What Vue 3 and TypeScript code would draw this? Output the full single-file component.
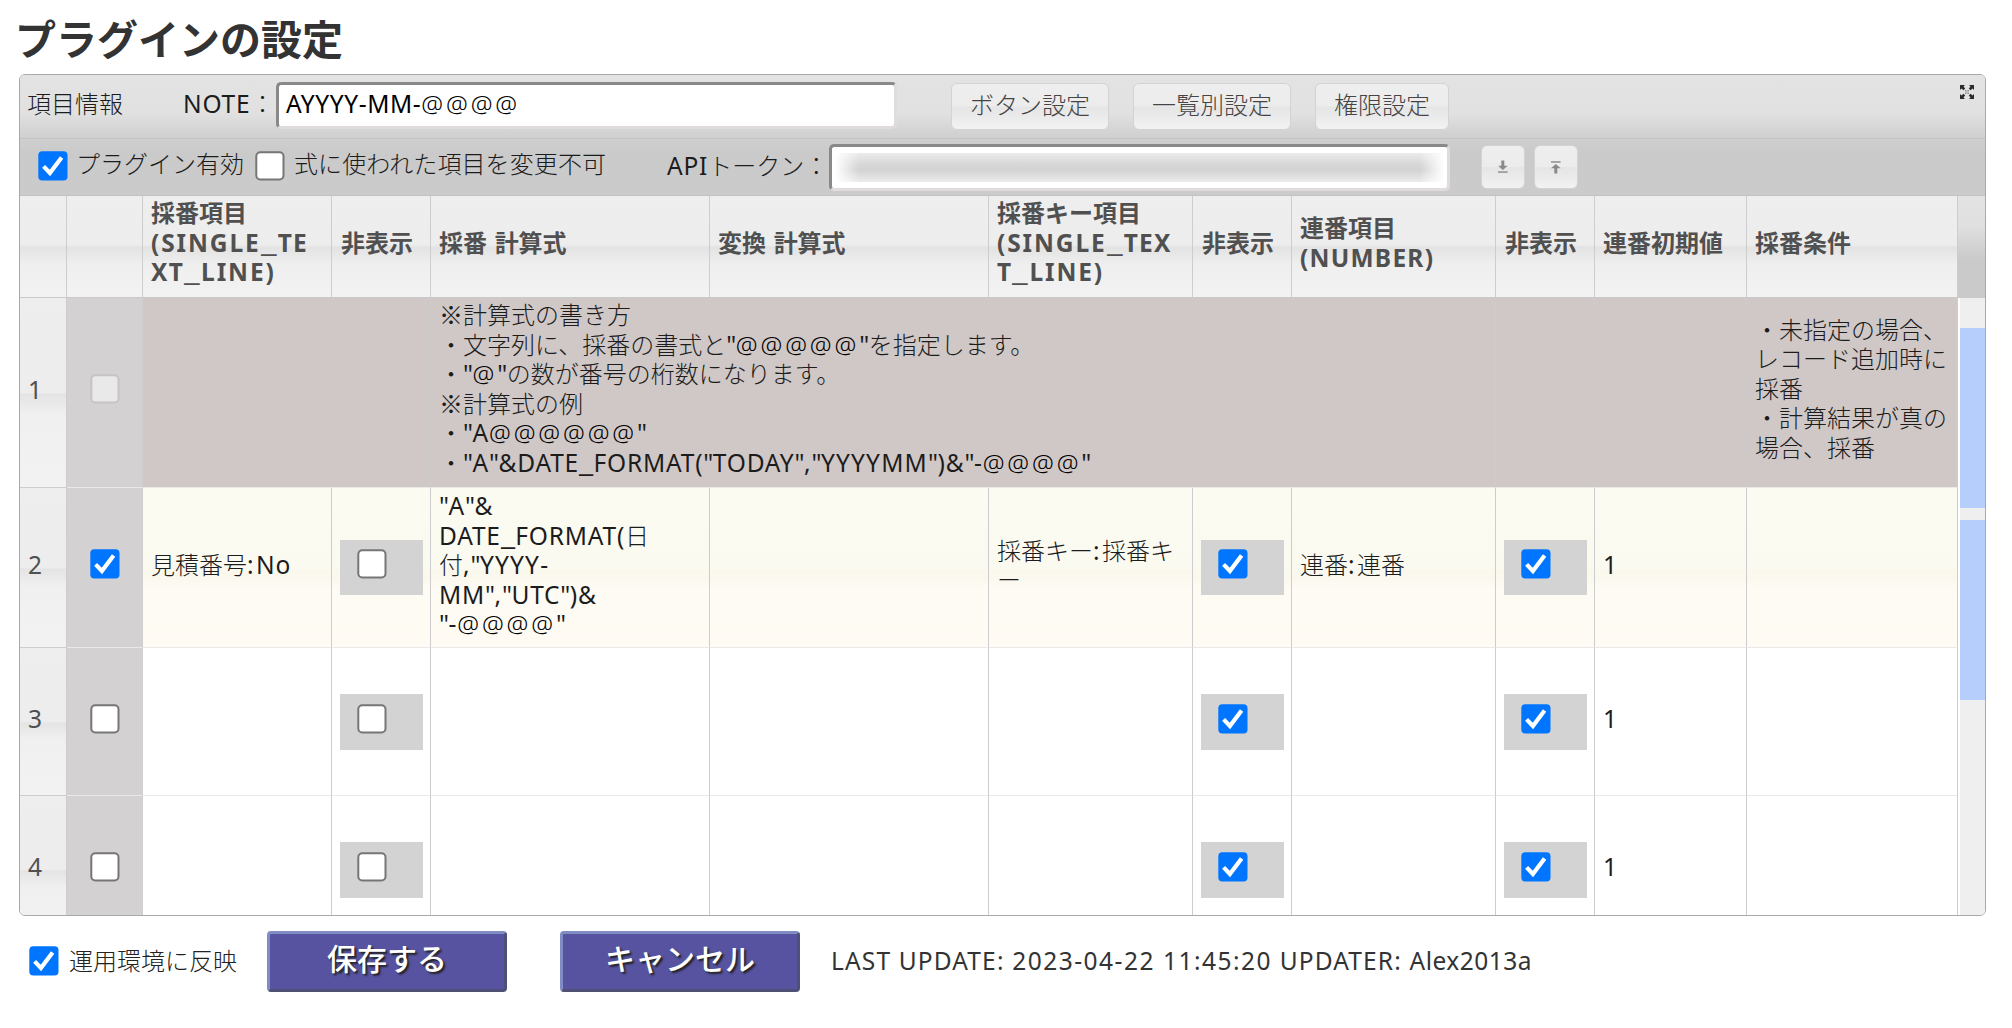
<script setup lang="ts">
import { h, type FunctionalComponent } from 'vue'

interface Row {
  no: number
  on: boolean
  item: string
  hide1: boolean
  formula: string[]
  key: string[]
  serial: string
}

const headers: string[][] = [
  [],
  [],
  ['採番項目', '(SINGLE_TE', 'XT_LINE)'],
  ['非表示'],
  ['採番 計算式'],
  ['変換 計算式'],
  ['採番キー項目', '(SINGLE_TEX', 'T_LINE)'],
  ['非表示'],
  ['連番項目', '(NUMBER)'],
  ['非表示'],
  ['連番初期値'],
  ['採番条件'],
]

const guide: string[] = [
  '※計算式の書き方',
  '・文字列に、採番の書式と"@@@@@"を指定します。',
  '・"@"の数が番号の桁数になります。',
  '※計算式の例',
  '・"A@@@@@@"',
  '・"A"&DATE_FORMAT("TODAY","YYYYMM")&"-@@@@"',
]
const condition: string[] = ['・未指定の場合、', 'レコード追加時に', '採番', '・計算結果が真の', '場合、採番']

const rows: Row[] = [
  {
    no: 2,
    on: true,
    item: '見積番号:No',
    hide1: false,
    formula: ['"A"&', 'DATE_FORMAT(日', '付,"YYYY-', 'MM","UTC")&', '"-@@@@"'],
    key: ['採番キー:採番キ', 'ー'],
    serial: '連番:連番',
  },
  { no: 3, on: false, item: '', hide1: false, formula: [], key: [], serial: '' },
  { no: 4, on: false, item: '', hide1: false, formula: [], key: [], serial: '' },
]

const runClass = (s: string): string => {
  const c = s[0]
  if (c === '@') return 'at'
  if (c === '_') return 'lat us'
  if (c === '"') return 'lat qt'
  if (c === ':') return 'lat co'
  if (s.charCodeAt(0) > 126) return 'jp'
  if (s.includes('IN')) return 'lat wide'
  return /Y{4}/.test(s) ? 'lat ys' : 'lat'
}

// Splits a line into Japanese, Latin and punctuation runs so each gets its own tracking
const Txt: FunctionalComponent<{ t: string }> = (p) =>
  h(
    'span',
    { class: 'txt' },
    (p.t.match(/@+|_+|"+|:+|[^\x00-\x1f"@_:\x7f-\uffff]+|[^\x20-\x7e]+/g) ?? []).map((s) =>
      h('span', { class: runClass(s) }, s),
    ),
  )
Txt.props = ['t']

const Check: FunctionalComponent<{ on?: boolean; off?: boolean }> = (p) =>
  h('svg', { class: 'check', width: 30, height: 30, viewBox: '0 0 30 30' }, [
    h('rect', {
      x: p.on ? 0.3 : 1.3,
      y: p.on ? 0.3 : 1.3,
      width: p.on ? 29.2 : 27.2,
      height: p.on ? 29.2 : 27.2,
      rx: 4,
      fill: p.on ? '#0075ff' : p.off ? '#e9e9e9' : '#fff',
      stroke: p.on ? 'none' : p.off ? '#c6c4c5' : '#767676',
      'stroke-width': 2,
    }),
    p.on ? h('path', { d: 'M5.6 15.4 L11.9 22 L23.6 6.4', fill: 'none', stroke: '#fff', 'stroke-width': 4.2 }) : null,
  ])
Check.props = { on: Boolean, off: Boolean }
</script>

<template>
  <main class="page">
    <h1>プラグインの設定</h1>
    <section class="panel">
      <div class="bar bar1">
        <span class="info">項目情報</span>
        <span class="note"><Txt t="NOTE：" /></span>
        <div class="input i1"><Txt t="AYYYY-MM-@@@@" /></div>
        <button class="btn b1">ボタン設定</button>
        <button class="btn b2">一覧別設定</button>
        <button class="btn b3">権限設定</button>
        <svg class="full" width="14" height="14" viewBox="0 0 14 14">
          <path d="M0 0h5L3.5 1.5 5.2 3.4 3.4 5.2 1.5 3.5 0 5zM14 0v5l-1.5-1.5-1.9 1.7-1.8-1.8 1.7-1.9L9 0zM0 14V9l1.5 1.5 1.9-1.7 1.8 1.8-1.7 1.9L5 14zM14 14H9l1.5-1.5-1.7-1.9 1.8-1.8 1.9 1.7L14 9z" fill="#2a2a2a" />
          <path d="M5.4 5.4l1 1M8.6 5.4l-1 1M5.4 8.6l1-1M8.6 8.6l-1-1" stroke="#666" stroke-width="1.2" />
        </svg>
      </div>
      <div class="bar bar2">
        <Check on />
        <span class="t1">プラグイン有効</span>
        <Check />
        <span class="t2">式に使われた項目を変更不可</span>
        <span class="t3"><Txt t="APIトークン：" /></span>
        <div class="input i2"><div class="mask"></div></div>
        <button class="btn ico k1">
          <svg width="12" height="14" viewBox="0 0 12 14"><path d="M4.3 0.5h3v5.2h3.4L5.8 10 1 5.7h3.3z" fill="#8a8a8a" /><rect x="1" y="11.2" width="9.6" height="1.7" fill="#9a9a9a" /></svg>
        </button>
        <button class="btn ico k2">
          <svg width="12" height="14" viewBox="0 0 12 14"><path d="M4.3 13.5h3V8.3h3.4L5.8 4 1 8.3h3.3z" fill="#8a8a8a" /><rect x="1" y="1.1" width="9.6" height="1.7" fill="#9a9a9a" /></svg>
        </button>
      </div>
      <div class="body">
        <div class="grid">
          <div v-for="(lines, i) in headers" :key="'h' + i" class="cell head">
            <Txt v-for="l in lines" :key="l" :t="l" />
          </div>

          <div class="cell num"><Txt t="1" /></div>
          <div class="cell sel first"><Check off /></div>
          <div class="cell tip span2"></div>
          <div class="cell tip span5"><Txt v-for="l in guide" :key="l" :t="l" /></div>
          <div class="cell tip"></div>
          <div class="cell tip"></div>
          <div class="cell tip"><Txt v-for="l in condition" :key="l" :t="l" /></div>

          <template v-for="r in rows" :key="r.no">
            <div class="cell num"><Txt :t="String(r.no)" /></div>
            <div class="cell sel" :class="{ first: r.on }"><Check :on="r.on" /></div>
            <div class="cell" :class="{ hot: r.on }"><Txt v-if="r.item" :t="r.item" /></div>
            <div class="cell" :class="{ hot: r.on }"><div class="box"><Check :on="r.hide1" /></div></div>
            <div class="cell" :class="{ hot: r.on }"><Txt v-for="l in r.formula" :key="l" :t="l" /></div>
            <div class="cell" :class="{ hot: r.on }"></div>
            <div class="cell" :class="{ hot: r.on }"><Txt v-for="l in r.key" :key="l" :t="l" /></div>
            <div class="cell" :class="{ hot: r.on }"><div class="box"><Check on /></div></div>
            <div class="cell" :class="{ hot: r.on }"><Txt v-if="r.serial" :t="r.serial" /></div>
            <div class="cell" :class="{ hot: r.on }"><div class="box"><Check on /></div></div>
            <div class="cell one" :class="{ hot: r.on }"><Txt t="1" /></div>
            <div class="cell" :class="{ hot: r.on }"></div>
          </template>
        </div>
        <div class="side">
          <div class="corner"></div>
          <div class="track"><div class="thumb"></div><div class="thumb"></div></div>
        </div>
      </div>
    </section>
    <footer class="foot">
      <Check on />
      <span class="reflect">運用環境に反映</span>
      <button class="main">保存する</button>
      <button class="main cancel">キャンセル</button>
      <span class="upd">LAST UPDATE: <span class="date">2023-04-22 11:45:20</span> UPDATER: <span class="who">Alex2013a</span></span>
    </footer>
  </main>
</template>

<style>
body { background: #fff; }
</style>

<style scoped>
* { box-sizing: border-box; }
.page {
  width: 2012px;
  height: 1028px;
  overflow: hidden;
  padding: 0 26px 0 19px;
  font: 300 24px/29.5px "Noto Sans CJK JP", sans-serif;
  color: #1c1c1c;
}
h1 {
  margin: 0 0 0 -4px;
  height: 74px;
  font-size: 41px;
  line-height: 75px;
  font-weight: 700;
  color: #333;
  white-space: nowrap;
}
button { font: inherit; padding: 0; margin: 0; }
.page :deep(.txt) { display: block; flex: none; white-space: pre; line-height: 29.5px; height: 29.5px; }
.page :deep(.lat), .page :deep(.at) { font-family: "Noto Sans", sans-serif; font-weight: 400; font-size: 24.5px; letter-spacing: 0.8px; line-height: 20px; }
.page :deep(.at) { font-weight: 300; letter-spacing: 2.9px; color: #000; }
.page :deep(.qt) { letter-spacing: -0.5px; }
.page :deep(.co) { letter-spacing: 2.4px; }
.page :deep(.ys) { letter-spacing: 1.2px; }
.input :deep(.ys) { letter-spacing: 0.6px; }
.page :deep(.us) { display: inline-block; width: 14.5px; letter-spacing: 0; transform: scaleX(1.3); transform-origin: left; }
.page :deep(.check) { display: block; flex: none; }

.panel {
  width: 1967px;
  height: 842px;
  border: 1px solid #a9a9a9;
  border-radius: 6px;
  overflow: hidden;
  display: flex;
  flex-direction: column;
}
.bar { display: flex; flex: none; white-space: nowrap; }
.bar1 {
  height: 64px;
  padding: 7px 11px 0 7px;
  border-bottom: 1px solid #c3c3c3;
  background: linear-gradient(#e3e3e3, #e1e1e1 60%, #cfcfcf);
}
.bar2 {
  height: 57px;
  padding: 5px 0 0 18px;
  border-bottom: 1px solid #c3c3c3;
  background: linear-gradient(#cfcfcf, #cacaca 25%, #cbcbcb);
}
.info { width: 156px; padding-top: 6px; }
.note { width: 93px; padding-top: 6px; }
.input {
  flex: none;
  width: 621px;
  height: 47px;
  border: 3px solid;
  border-color: #8a8888 #e0dcdc #e0dcdc #8a8888;
  border-radius: 5px;
  background: #fff;
  color: #000;
  padding: 3px 7px;
}
.btn {
  flex: none;
  height: 47px;
  border: 1px solid #d3d3d3;
  border-radius: 6px;
  background: linear-gradient(#eee, #ececec 49%, #e5e5e5 51%, #f2f2f2);
  color: #444;
  line-height: 39px;
  padding-bottom: 6px;
}
.b1 { width: 158px; margin: 1px 24px 0 54px; }
.b2 { width: 158px; margin: 1px 24px 0 0; }
.b3 { width: 134px; margin-top: 1px; }
.full { margin: 3px 0 0 auto; }
.bar2 :deep(.check) { margin-top: 7px; }
.t1 { flex: none; width: 187px; padding: 4px 0 0 8px; }
.t2 { flex: none; padding-top: 4px; margin-left: 9px; width: 373px; letter-spacing: 0.1px; }
.t3 { flex: none; padding-top: 5.5px; width: 162px; }
.i2 { padding: 6px 3px; }
.mask {
  height: 29px;
  background:
    linear-gradient(90deg, #fff 0, transparent 4%, transparent 96%, #fff),
    linear-gradient(#ebebeb, #d8d8d8 38%, #d2d2d2 58%, #ececec);
}
.ico { width: 44px; height: 44px; display: flex; align-items: center; justify-content: center; padding: 0; }
.k1 { margin: 1px 9px 0 31px; }
.k2 { margin-top: 1px; }

.body { display: flex; flex: 1; min-height: 0; overflow: hidden; }
.grid {
  display: grid;
  flex: none;
  width: 1938px;
  grid-template-columns: 47px 76px 189px 99px 279px 279px 204px 99px 204px 99px 152px 211px;
  grid-template-rows: 102px 190px 160px 148px 148px;
}
.cell {
  border-right: 1px solid #cdcdcd;
  border-bottom: 1px solid #e9e9e9;
  padding: 0 0 7px 8px;
  display: flex;
  flex-direction: column;
  justify-content: center;
  overflow: hidden;
  background: #fff;
}
.head {
  font-weight: 700;
  color: #505050;
  border-bottom-color: #c9c9c9;
  padding-bottom: 10px;
  background: linear-gradient(#eee, #ededed 48%, #e3e3e3 51%, #efefef 68%, #f2f2f2);
}
.head:nth-child(4), .head:nth-child(8), .head:nth-child(10) { padding-left: 9px; }
.head :deep(.lat) { font-weight: 700; letter-spacing: 1.25px; }
.head :deep(.wide) { letter-spacing: 1.9px; }
.head :deep(.us) { width: 17px; letter-spacing: 0; transform: scaleX(1.55); }
.num {
  color: #505050;
  border-bottom-color: #cdcdcd;
  background: linear-gradient(#eee, #ededed 50%, #e4e4e4 51%, #f0f0f0 62%, #f2f2f2);
}
.sel { background: #d3d1d2; border-right-color: #d0cecf; padding: 0 0 6px 23px; }
.first { padding-bottom: 8px; }
.tip { background: #d0c8c6; border-right-color: #cdcbcb; padding-bottom: 10px; }
.span2 { grid-column: span 2; }
.span5 { grid-column: span 5; }
.hot { background: linear-gradient(#fbfbf2, #fbfaf1 50%, #faf8ec 53%, #fdfbf3 64%, #fffbf4); }
.box { flex: none; width: 83px; height: 56px; background: #d3d3d3; padding: 10px 0 0 17px; margin-top: 7px; }
.hot .box { height: 55px; padding-top: 9px; margin-top: 6px; }
.one { padding-left: 8px; }
.side { width: 27px; display: flex; flex-direction: column; flex: none; }
.corner { height: 102px; background: linear-gradient(#e3e3e3 0, #e0e0e0 30%, #cacaca 62%, #cacaca); }
.track { flex: 1; margin-left: 2px; background: #efefef; padding-top: 30px; }
.thumb { height: 180px; margin-bottom: 12px; background: #b5cefb; }

.foot { display: flex; padding: 15px 0 0 10px; color: #333; white-space: nowrap; }
.foot > :deep(.check) { margin-top: 15px; }
.reflect { width: 208px; padding: 14px 0 0 10px; color: #222; }
.main {
  flex: none;
  width: 240px;
  height: 61px;
  border: 3px solid;
  border-color: #7f8dc4 #4e5175 #4e5175 #7f8dc4;
  border-radius: 4px;
  background: #5753a0;
  color: #fff;
  font-size: 30px;
  font-weight: 500;
  line-height: 38px;
  padding-bottom: 10px;
  text-shadow: 2px 2px 2px #222;
}
.cancel { margin: 0 31px 0 53px; }
.upd { font: 400 24.5px/29.5px "Noto Sans", sans-serif; letter-spacing: 1.15px; padding-top: 15px; }
.date { letter-spacing: 1.5px; }
.who { letter-spacing: 0.5px; }
</style>
